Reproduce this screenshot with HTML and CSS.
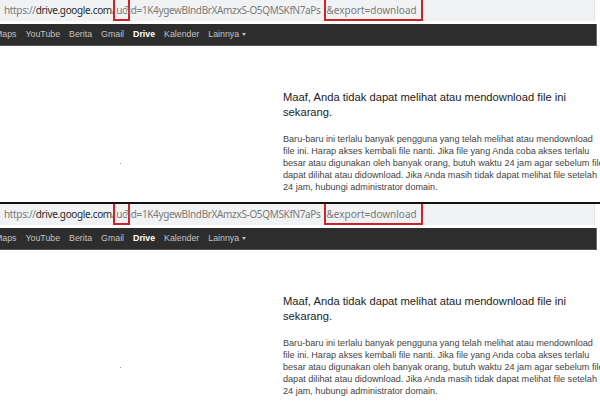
FILE: index.html
```html
<!DOCTYPE html>
<html lang="id">
<head>
    <meta charset="UTF-8">
    <title>Google Drive - Tidak dapat mendownload</title>
    <link rel="stylesheet" href="styles.css">
</head>
<body>
    <div class="shot">
        <div class="urlbar">
            <span class="scheme">https://</span><span class="host">drive.google.com</span><span class="path">/<span class="mark mark-uc">uc</span>?id=1K4ygewBlndBrXAmzxS-O5QMSKfN7aPs<span class="mark mark-export">&amp;export=download</span></span>
        </div>
        <nav class="gbar">
            <a href="#" class="first">Maps</a>
            <a href="#">YouTube</a>
            <a href="#">Berita</a>
            <a href="#">Gmail</a>
            <a href="#" class="active">Drive</a>
            <a href="#">Kalender</a>
            <a href="#" class="more">Lainnya</a>
        </nav>
        <div class="content">
            <span class="dot"></span>
            <div class="message">
                <h1>Maaf, Anda tidak dapat melihat atau mendownload file ini sekarang.</h1>
                <p>Baru-baru ini terlalu banyak pengguna yang telah melihat atau mendownload<br>
                file ini. Harap akses kembali file nanti. Jika file yang Anda coba akses terlalu<br>
                besar atau digunakan oleh banyak orang, butuh waktu 24 jam agar sebelum file<br>
                dapat dilihat atau didownload. Jika Anda masih tidak dapat melihat file setelah<br>
                24 jam, hubungi administrator domain.</p>
            </div>
        </div>
    </div>

    <div class="shot second">
        <div class="urlbar">
            <span class="scheme">https://</span><span class="host">drive.google.com</span><span class="path">/<span class="mark mark-uc">uc</span>?id=1K4ygewBlndBrXAmzxS-O5QMSKfN7aPs<span class="mark mark-export">&amp;export=download</span></span>
        </div>
        <nav class="gbar">
            <a href="#" class="first">Maps</a>
            <a href="#">YouTube</a>
            <a href="#">Berita</a>
            <a href="#">Gmail</a>
            <a href="#" class="active">Drive</a>
            <a href="#">Kalender</a>
            <a href="#" class="more">Lainnya</a>
        </nav>
        <div class="content">
            <span class="dot"></span>
            <div class="message">
                <h1>Maaf, Anda tidak dapat melihat atau mendownload file ini sekarang.</h1>
                <p>Baru-baru ini terlalu banyak pengguna yang telah melihat atau mendownload<br>
                file ini. Harap akses kembali file nanti. Jika file yang Anda coba akses terlalu<br>
                besar atau digunakan oleh banyak orang, butuh waktu 24 jam agar sebelum file<br>
                dapat dilihat atau didownload. Jika Anda masih tidak dapat melihat file setelah<br>
                24 jam, hubungi administrator domain.</p>
            </div>
        </div>
    </div>
</body>
</html>
```

FILE: styles.css
```css
html, body {
    margin: 0;
    padding: 0;
    background: #fff;
}
body {
    width: 600px;
    height: 407px;
    overflow: hidden;
    font-family: "Liberation Sans", Arial, sans-serif;
}
.shot {
    height: 202px;
    overflow: hidden;
}
.shot.second {
    border-top: 2px solid #111;
    height: 203px;
}
.urlbar {
    width: 590px;
    height: 21px;
    padding-left: 4px;
    background: #f1f2f4;
    border-right: 1px solid #e2e3e6;
    font-family: "Noto Sans", "Liberation Sans", sans-serif;
    font-size: 10px;
    letter-spacing: -0.35px;
    line-height: 21px;
    white-space: nowrap;
    color: #7a7a7a;
}
.urlbar .host {
    color: #2a2a2a;
}
.mark {
    border: 2px solid #cf2228;
    padding: 3px 1px 2px;
}
.mark-uc {
    margin: 0 -5px 0 -2px;
    padding-right: 1px;
}
.mark-export {
    margin-left: 3px;
    padding: 3px 4px 2px 1px;
    letter-spacing: 0;
}
.gbar {
    display: flex;
    gap: 9px;
    width: 597px;
    height: 22px;
    margin-top: 3px;
    background: #2d2d2d;
    border-right: 1px solid #6a6a6a;
    border-bottom: 1px solid #555;
    box-sizing: border-box;
}
.gbar a {
    color: #c2c2c2;
    text-decoration: none;
    font-size: 8.8px;
    line-height: 21px;
    white-space: nowrap;
}
.gbar a.first {
    margin-left: -5px;
}
.gbar a.active {
    color: #fff;
    font-weight: bold;
}
.gbar a.more::after {
    content: "";
    display: inline-block;
    margin-left: 3px;
    vertical-align: middle;
    border-left: 2.5px solid transparent;
    border-right: 2.5px solid transparent;
    border-top: 3px solid #c2c2c2;
}
.content {
    display: flex;
    padding-top: 44px;
}
.dot {
    width: 1px;
    height: 1px;
    margin: 73px 0 0 120px;
    background: #999;
    flex-shrink: 0;
}
.message {
    margin-left: 162px;
    width: 330px;
    white-space: nowrap;
}
.message h1 {
    margin: 0 0 13px;
    width: 300px;
    white-space: normal;
    font-size: 11.2px;
    line-height: 15px;
    font-weight: normal;
    color: #222;
}
.message p {
    margin: 0;
    font-size: 9.1px;
    line-height: 12px;
    color: #444;
}
```
